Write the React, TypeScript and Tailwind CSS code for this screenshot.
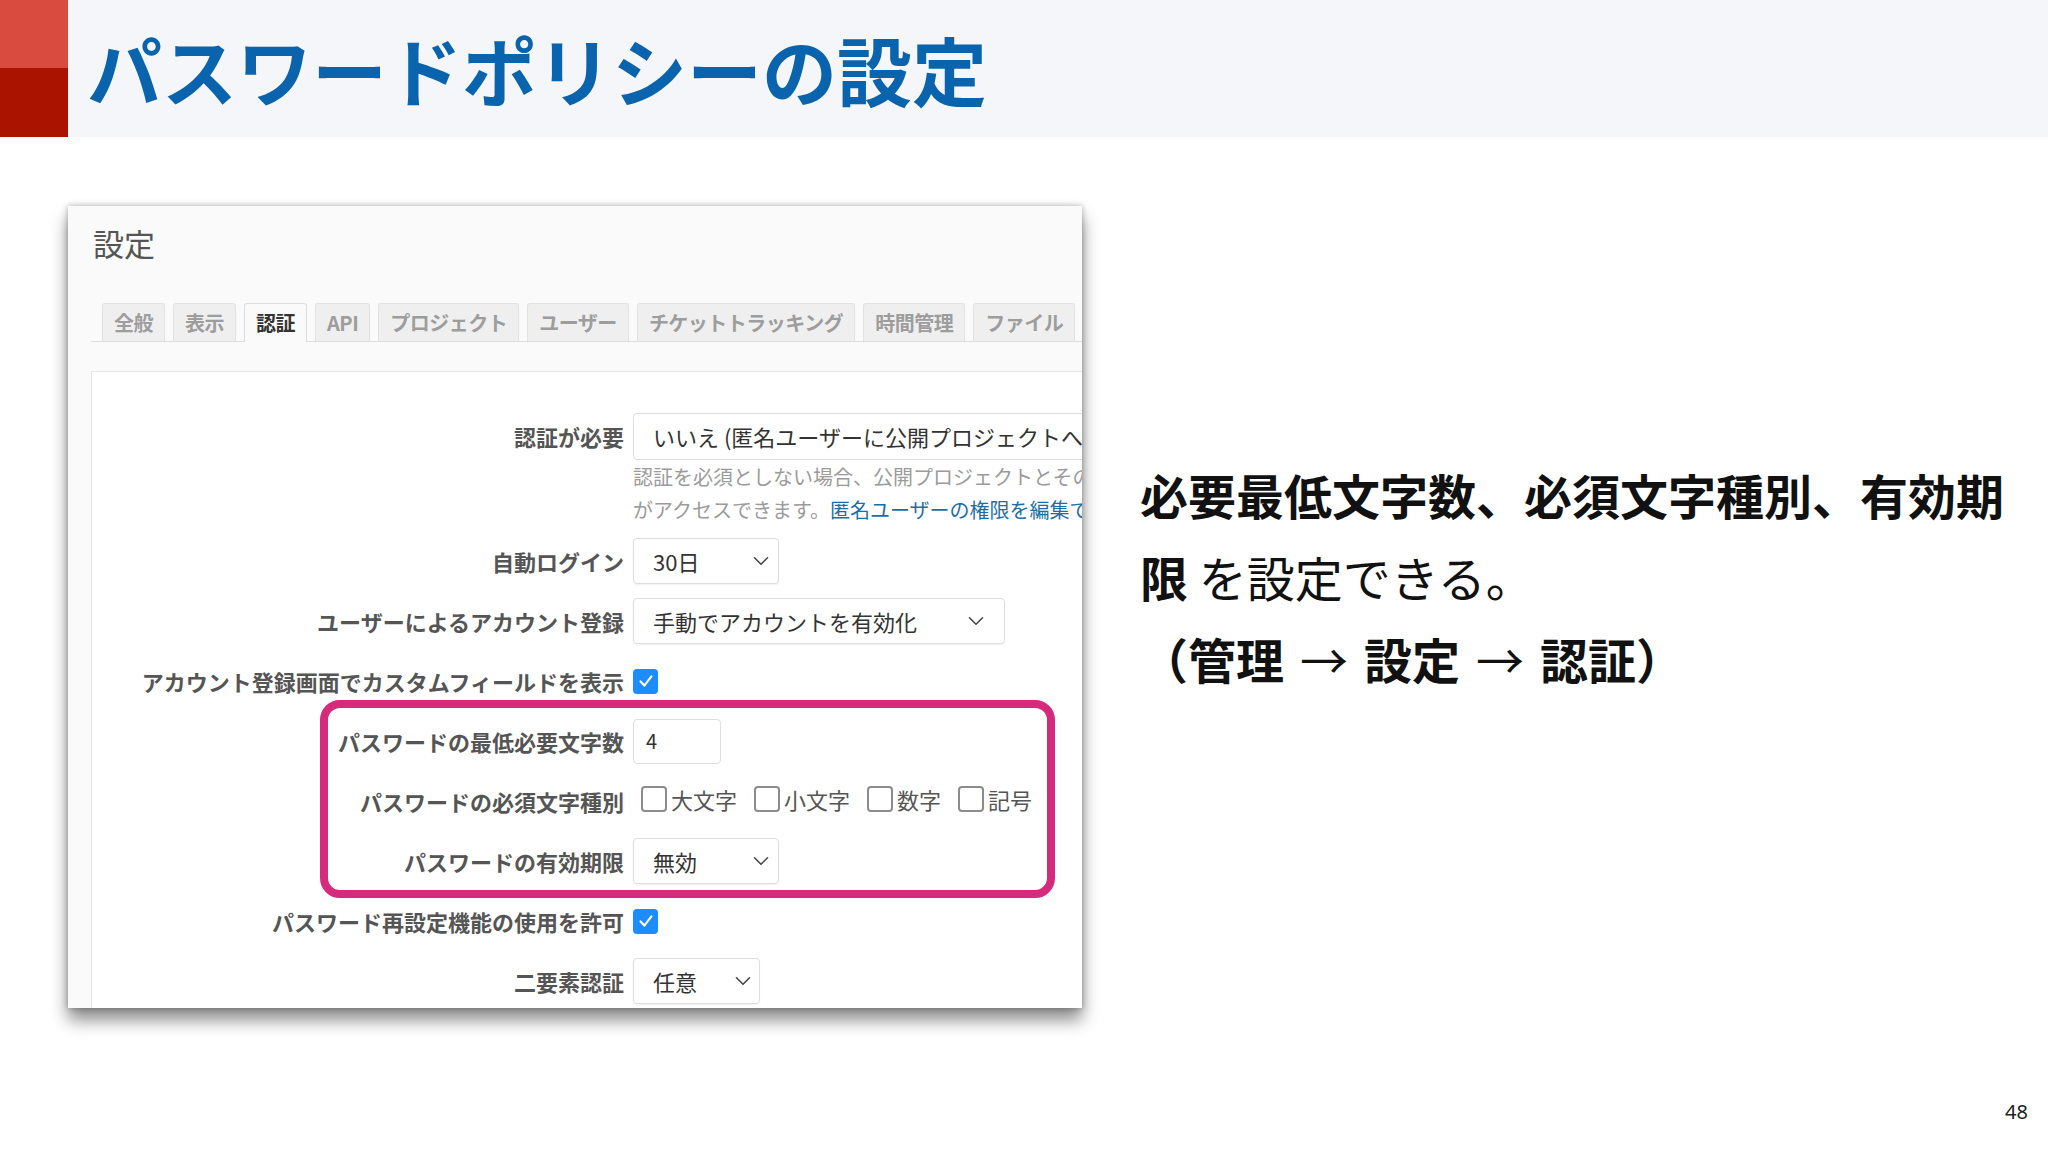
import { ChevronDown } from "lucide-react";

const tabs = [
  "全般",
  "表示",
  "認証",
  "API",
  "プロジェクト",
  "ユーザー",
  "チケットトラッキング",
  "時間管理",
  "ファイル",
];

function Checked() {
  return (
    <span className="flex h-[25px] w-[25px] shrink-0 items-center justify-center rounded-[4px] bg-[#1d8cff]">
      <svg width="20" height="20" viewBox="0 0 24 24" fill="none">
        <path
          d="M5.5 12.5l4.5 5 8.5-11"
          stroke="#fff"
          strokeWidth="2.6"
          strokeLinecap="round"
          strokeLinejoin="round"
        />
      </svg>
    </span>
  );
}

function Unchecked() {
  return (
    <span className="block h-[26px] w-[26px] shrink-0 rounded-[4px] border-2 border-[#8c8c8c] bg-white" />
  );
}

function SelectBox({
  value,
  width,
  pr,
}: {
  value: string;
  width: string;
  pr: string;
}) {
  return (
    <div
      className={`flex h-[46px] shrink-0 items-center justify-between whitespace-nowrap rounded-[4px] border border-[#dedede] bg-white pl-[19px] text-[22px] text-[#333] shadow-[0_1px_2px_rgba(0,0,0,0.06)] ${width} ${pr}`}
    >
      <span>{value}</span>
      <ChevronDown size={26} strokeWidth={1.4} className="text-[#444]" />
    </div>
  );
}

function Row({
  label,
  children,
  className = "",
}: {
  label: string;
  children: React.ReactNode;
  className?: string;
}) {
  return (
    <div className={`flex h-[46px] items-center gap-[9px] ${className}`}>
      <div className="w-[532px] shrink-0 whitespace-nowrap text-right text-[22px] font-bold text-[#555]">
        {label}
      </div>
      {children}
    </div>
  );
}

export default function App() {
  return (
    <div className="relative h-[1152px] w-[2048px] overflow-hidden bg-white font-['Noto_Sans_CJK_JP',sans-serif]">
      {/* title band */}
      <div className="flex h-[137px] bg-[#f5f6f9]">
        <div className="flex w-[68px] flex-col">
          <div className="h-[68px] bg-[#d84b3e]" />
          <div className="flex-1 bg-[#a91300]" />
        </div>
        <h1 className="ml-[19px] whitespace-nowrap text-[75px] font-bold leading-[137px] text-[#0a64ad]">
          パスワードポリシーの設定
        </h1>
      </div>

      <div className="flex items-start">
        {/* screenshot panel */}
        <div className="ml-[68px] mt-[69px] h-[802px] w-[1014px] shrink-0 overflow-hidden bg-[#fafafa] shadow-[0_12px_16px_rgba(0,0,0,0.45),0_0_6px_rgba(0,0,0,0.3)]">
          <div className="pl-[25px] pt-[17px] text-[31px] leading-[40px] text-[#555]">設定</div>

          <div className="ml-[23px] mt-[40px] flex h-[39px] gap-2 border-b border-[#dddddd] pl-[11px]">
            {tabs.map((t) =>
              t === "認証" ? (
                <div
                  key={t}
                  className="-mb-px flex shrink-0 items-center whitespace-nowrap rounded-t-[3px] border border-b-0 border-[#dddddd] bg-[#fafafa] px-[11px] text-[20px] font-bold tracking-[-0.5px] text-[#333]"
                >
                  {t}
                </div>
              ) : (
                <div
                  key={t}
                  className="flex shrink-0 items-center whitespace-nowrap rounded-t-[3px] border border-b-0 border-[#e2e2e2] bg-[#efefef] px-[11px] text-[20px] font-bold tracking-[-0.5px] text-[#9d9d9d]"
                >
                  {t}
                </div>
              )
            )}
          </div>

          <div className="relative ml-[23px] mt-[29px] h-[700px] w-[1000px] border border-[#e6e6e6] bg-white pt-[41px]">
            <Row label="認証が必要" className="h-[47px]">
              <div className="flex h-[47px] w-[700px] shrink-0 items-center whitespace-nowrap rounded-[4px] border border-[#dedede] bg-white pl-[19px] text-[22px] text-[#333]">
                いいえ (匿名ユーザーに公開プロジェクトへ
              </div>
            </Row>
            <div className="ml-[541px] whitespace-nowrap text-[20px] leading-[33px] text-[#9b9b9b]">
              <div>認証を必須としない場合、公開プロジェクトとその</div>
              <div>
                がアクセスできます。
                <span className="text-[#1b6fa8]">匿名ユーザーの権限を編集で</span>
              </div>
            </div>

            <Row label="自動ログイン" className="mt-[12px]">
              <SelectBox value="30日" width="w-[146px]" pr="pr-[4px]" />
            </Row>
            <Row label="ユーザーによるアカウント登録" className="mt-[14px]">
              <SelectBox value="手動でアカウントを有効化" width="w-[372px]" pr="pr-[15px]" />
            </Row>
            <Row label="アカウント登録画面でカスタムフィールドを表示" className="mt-[14px]">
              <Checked />
            </Row>
            <Row label="パスワードの最低必要文字数" className="mt-[14px]">
              <div className="flex h-[45px] w-[88px] shrink-0 items-center rounded-[4px] border border-[#dedede] bg-white pl-[12px] text-[20px] text-[#333]">
                4
              </div>
            </Row>
            <Row label="パスワードの必須文字種別" className="mt-[14px]">
              <div className="ml-[8px] flex -translate-y-[2px] items-center text-[22px] text-[#555]">
                {["大文字", "小文字", "数字", "記号"].map((c) => (
                  <div key={c} className="mr-[17px] flex items-center gap-[4px]">
                    <Unchecked />
                    <span>{c}</span>
                  </div>
                ))}
              </div>
            </Row>
            <Row label="パスワードの有効期限" className="mt-[14px]">
              <SelectBox value="無効" width="w-[146px]" pr="pr-[4px]" />
            </Row>
            <Row label="パスワード再設定機能の使用を許可" className="mt-[14px]">
              <Checked />
            </Row>
            <Row label="二要素認証" className="mt-[14px]">
              <SelectBox value="任意" width="w-[127px]" pr="pr-[3px]" />
            </Row>

            {/* highlight around password rules */}
            <div className="absolute left-[228px] top-[328px] h-[198px] w-[735px] rounded-[20px] border-[8px] border-[#d62a7c]" />
          </div>
        </div>

        {/* explanation */}
        <div className="ml-[58px] mt-[316px] whitespace-nowrap text-[48px] leading-[82px] text-[#111]">
          <div className="font-bold">必要最低文字数、必須文字種別、有効期</div>
          <div>
            <span className="font-bold">限</span> を設定できる。
          </div>
          <div className="font-bold">
            （管理<span className="mx-[16px] font-normal">→</span>設定
            <span className="mx-[16px] font-normal">→</span>認証）
          </div>
        </div>
      </div>

      <div className="absolute right-[20px] top-[1100px] font-['Noto_Sans',sans-serif] text-[20px] leading-[24px] text-[#222]">
        48
      </div>
    </div>
  );
}
